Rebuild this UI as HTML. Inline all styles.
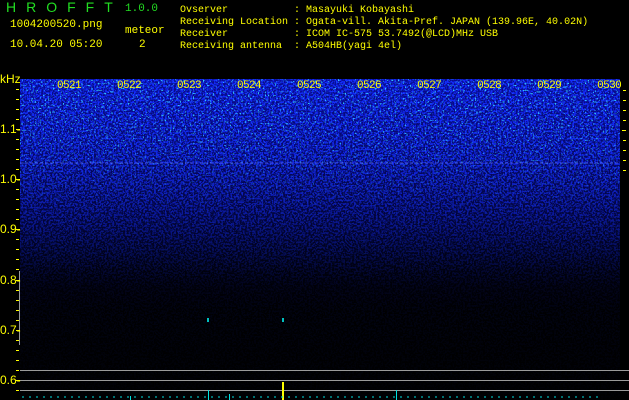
<!DOCTYPE html>
<html><head><meta charset="utf-8"><style>
html,body{margin:0;padding:0;background:#000;}
body{width:629px;height:400px;overflow:hidden;position:relative;font-family:"Liberation Mono",monospace;}
.t{position:absolute;white-space:pre;color:#ffff00;font-size:10px;line-height:12px;}
.y{font-size:12px;font-family:"Liberation Sans",sans-serif;}
</style></head><body>
<svg width="629" height="400" style="position:absolute;left:0;top:0">
<defs>
<linearGradient id="g" x1="0" y1="0" x2="0" y2="1">
<stop offset="0" stop-color="#080c90"/>
<stop offset="0.2" stop-color="#060970"/>
<stop offset="0.45" stop-color="#020435"/>
<stop offset="0.6" stop-color="#00010c"/>
<stop offset="0.72" stop-color="#000002"/>
<stop offset="1" stop-color="#000000"/>
</linearGradient>
<linearGradient id="m" x1="0" y1="0" x2="0" y2="1">
<stop offset="0" stop-color="#fff" stop-opacity="1"/>
<stop offset="0.25" stop-color="#fff" stop-opacity="0.85"/>
<stop offset="0.5" stop-color="#fff" stop-opacity="0.35"/>
<stop offset="0.65" stop-color="#fff" stop-opacity="0.08"/>
<stop offset="1" stop-color="#fff" stop-opacity="0.02"/>
</linearGradient>
<filter id="n" x="0" y="0" width="100%" height="100%" color-interpolation-filters="sRGB">
<feTurbulence type="fractalNoise" baseFrequency="0.55" numOctaves="2" seed="5" result="t"/>
<feColorMatrix in="t" values="0 0 0 0 0.08  0 0 0 0 0.18  0 0 0 0 1  7 0 0 0 -3.1" result="c"/>
<feComposite in="c" in2="SourceGraphic" operator="in"/>
</filter>
<filter id="n2" x="0" y="0" width="100%" height="100%" color-interpolation-filters="sRGB">
<feTurbulence type="fractalNoise" baseFrequency="0.6" numOctaves="1" seed="11" result="t"/>
<feColorMatrix in="t" values="0 0 0 0 0.2  0 0 0 0 0.8  0 0 0 0 1  0 14 0 0 -8.8" result="c"/>
<feComposite in="c" in2="SourceGraphic" operator="in"/>
</filter>
</defs>
<rect x="20" y="79" width="600" height="321" fill="url(#g)"/>
<rect x="20" y="79" width="600" height="321" fill="url(#m)" filter="url(#n)"/>
<rect x="20" y="79" width="600" height="200" fill="url(#m)" filter="url(#n2)"/>
<line x1="20" y1="163" x2="620" y2="163" stroke="#5a6cff" stroke-width="1" stroke-dasharray="3 2" opacity="0.7"/>
<g stroke="#9a9a9a" stroke-width="1">
<line x1="20" y1="370.5" x2="629" y2="370.5"/>
<line x1="20" y1="380.5" x2="629" y2="380.5"/>
<line x1="20" y1="390.5" x2="629" y2="390.5"/>
<line x1="19.5" y1="271" x2="19.5" y2="345"/>
</g>
<line x1="283" y1="382" x2="283" y2="400" stroke="#ffff00" stroke-width="2"/>
<g stroke="#00e0e0" stroke-width="1">
<line x1="208.5" y1="390" x2="208.5" y2="400"/><line x1="229.5" y1="394" x2="229.5" y2="400"/>
<line x1="396.5" y1="390" x2="396.5" y2="400"/><line x1="130.5" y1="396" x2="130.5" y2="400"/>
<line x1="22" y1="397" x2="600" y2="397" stroke-dasharray="2 5" />
</g>
<rect x="207" y="318" width="2" height="4" fill="#00c0c0"/>
<rect x="282" y="318" width="2" height="4" fill="#00c0c0"/>
<g fill="#ffff00">
<rect x="16" y="89" width="3" height="1"/><rect x="16" y="99" width="3" height="1"/><rect x="16" y="109" width="3" height="1"/><rect x="16" y="119" width="3" height="1"/><rect x="16" y="129" width="4" height="1"/>
<rect x="16" y="139" width="3" height="1"/><rect x="16" y="149" width="3" height="1"/><rect x="16" y="159" width="3" height="1"/><rect x="16" y="169" width="3" height="1"/><rect x="16" y="179" width="4" height="1"/>
<rect x="16" y="189" width="3" height="1"/><rect x="16" y="199" width="3" height="1"/><rect x="16" y="209" width="3" height="1"/><rect x="16" y="219" width="3" height="1"/><rect x="16" y="229" width="4" height="1"/>
<rect x="16" y="239" width="3" height="1"/><rect x="16" y="249" width="3" height="1"/><rect x="16" y="259" width="3" height="1"/><rect x="16" y="269" width="3" height="1"/><rect x="16" y="280" width="4" height="1"/>
<rect x="16" y="290" width="3" height="1"/><rect x="16" y="300" width="3" height="1"/><rect x="16" y="310" width="3" height="1"/><rect x="16" y="320" width="3" height="1"/><rect x="16" y="330" width="4" height="1"/>
<rect x="16" y="340" width="3" height="1"/><rect x="16" y="350" width="3" height="1"/><rect x="16" y="360" width="3" height="1"/><rect x="16" y="370" width="3" height="1"/><rect x="16" y="380" width="4" height="1"/><rect x="16" y="390" width="3" height="1"/>
<rect x="623" y="90" width="3" height="1"/><rect x="623" y="100" width="3" height="1"/><rect x="623" y="110" width="3" height="1"/><rect x="623" y="120" width="3" height="1"/><rect x="622" y="130" width="4" height="1"/><rect x="623" y="140" width="3" height="1"/><rect x="623" y="150" width="3" height="1"/><rect x="623" y="160" width="3" height="1"/><rect x="623" y="170" width="3" height="1"/>
</g>
</svg>
<div class="t" style="left:6px;top:1px;color:#22dd22;font-size:14px;font-family:'Liberation Sans',sans-serif;letter-spacing:10px">HROFFT</div>
<div class="t" style="left:125px;top:3px;color:#22dd22;font-size:11px">1.0.0</div>
<div class="t" style="left:10px;top:19px;font-size:11px">1004200520.png</div>
<div class="t" style="left:125px;top:25px;font-size:11px">meteor</div>
<div class="t" style="left:10px;top:39px;font-size:11px">10.04.20 05:20</div>
<div class="t" style="left:139px;top:39px;font-size:11px">2</div>
<div class="t" style="left:180px;top:5px;font-size:10px">Ovserver           : Masayuki Kobayashi
Receiving Location : Ogata-vill. Akita-Pref. JAPAN (139.96E, 40.02N)
Receiver           : ICOM IC-575 53.7492(@LCD)MHz USB
Receiving antenna  : A504HB(yagi 4el)</div>
<div class="t y" style="left:0;top:73px">kHz</div>
<div class="t y" style="left:0;top:123px">1.1-</div>
<div class="t y" style="left:0;top:173px">1.0-</div>
<div class="t y" style="left:0;top:223px">0.9-</div>
<div class="t y" style="left:0;top:274px">0.8-</div>
<div class="t y" style="left:0;top:324px">0.7-</div>
<div class="t y" style="left:0;top:374px">0.6-</div>
<div class="t" style="left:57px;top:80px;font-size:11px;letter-spacing:-0.6px;word-spacing:0">0521      0522      0523      0524      0525      0526      0527      0528      0529      0530</div>
</body></html>
